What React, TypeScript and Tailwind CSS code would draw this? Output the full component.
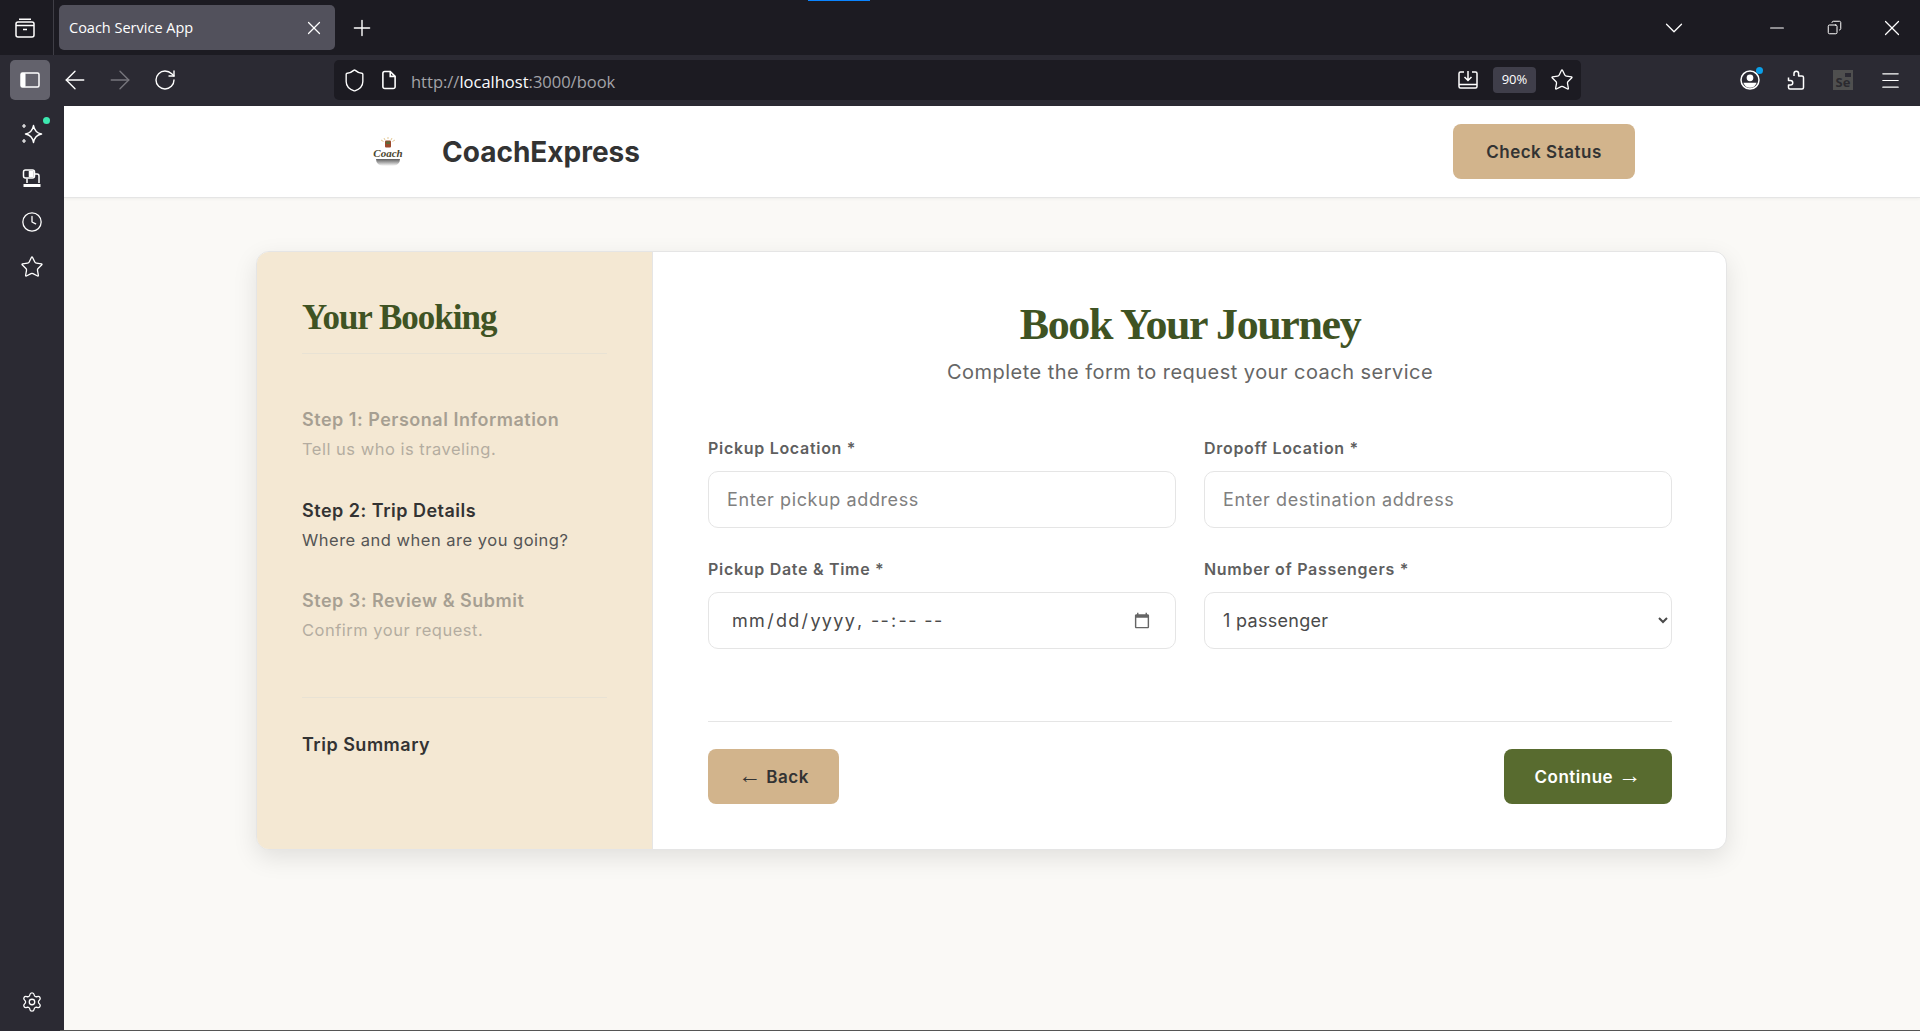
import { ArrowLeft, ArrowRight, ChevronDown, Clock, Copy, Menu, Minus, Plus, RotateCw, Settings, Shield, Star, X } from "lucide-react";

const SANS = "font-['Inter','Noto_Sans',sans-serif]";
const SERIF = "font-['Liberation_Serif',serif]";
const ARROW = "font-['Liberation_Sans',sans-serif] font-normal text-[23px] leading-[0]";

const STEPS = [
	{ title: "Step 1: Personal Information", text: "Tell us who is traveling.", active: false },
	{ title: "Step 2: Trip Details", text: "Where and when are you going?", active: true },
	{ title: "Step 3: Review & Submit", text: "Confirm your request.", active: false },
];

function TabGroupIcon() {
	return (
		<svg width="24" height="24" viewBox="0 0 24 24" fill="none" stroke="currentColor" strokeWidth="1.5">
			<rect x="3" y="6" width="18" height="15" rx="2" />
			<path d="M6 3.200h12M3 9.500h18M10 13.500h4" />
		</svg>
	);
}

function SidebarIcon() {
	return (
		<svg width="22" height="22" viewBox="0 0 22 22" fill="none">
			<rect x="2" y="4" width="18" height="14" rx="1.500" stroke="white" strokeWidth="1.500" />
			<rect x="2" y="4" width="4.500" height="14" rx="1" fill="white" />
		</svg>
	);
}

function FileIcon() {
	return (
		<svg width="22" height="22" viewBox="0 0 18 18" fill="none" stroke="currentColor" strokeWidth="1.300">
			<path d="M4 3.500a1.500 1.500 0 0 1 1.500-1.500H10l4 4v8.500a1.500 1.500 0 0 1-1.500 1.500h-7A1.500 1.500 0 0 1 4 14.500z" />
			<path d="M10 2v4h4" />
		</svg>
	);
}

function SaveIcon() {
	return (
		<svg width="22" height="20" viewBox="0 0 22 20" fill="none" stroke="currentColor" strokeWidth="1.500">
			<path d="M7 2H3.500A1.500 1.500 0 0 0 2 3.500v13A1.500 1.500 0 0 0 3.500 18h15a1.500 1.500 0 0 0 1.500-1.500v-13A1.500 1.500 0 0 0 18.500 2H15" />
			<path d="M2 14.500h18M11 1v9M7.500 7l3.500 3.500L14.500 7" />
		</svg>
	);
}

function AccountIcon() {
	return (
		<svg width="20" height="20" viewBox="0 0 20 20" fill="none" stroke="currentColor" strokeWidth="1.500">
			<circle cx="10" cy="10" r="9" />
			<circle cx="10" cy="7.800" r="2.600" fill="currentColor" />
			<path d="M4.500 13.500h11a6 6 0 0 1-11 0z" fill="currentColor" />
		</svg>
	);
}

function PuzzleIcon() {
	return (
		<svg width="18" height="20" viewBox="0 0 18 20" fill="none" stroke="currentColor" strokeWidth="1.500" strokeLinejoin="round">
			<path d="M7 6V3.500a2.300 2.300 0 0 1 4.600 0V6h3.400a1.500 1.500 0 0 1 1.500 1.500v10a1.500 1.500 0 0 1-1.500 1.500H3a1.500 1.500 0 0 1-1.500-1.500V15H3.500a2 2 0 0 0 0-4.500H1.500V7.500" />
		</svg>
	);
}

function SparkleIcon() {
	return (
		<svg width="24" height="24" viewBox="0 0 24 24" fill="none" stroke="currentColor" strokeWidth="1.500" strokeLinejoin="round">
			<path d="M13.500 3.500c.8 5 3 7.500 8 8.500-5 1-7.200 3.500-8 8.500-.8-5-3-7.500-8-8.500 5-1 7.200-3.500 8-8.500z" />
			<path d="M4 2v4M2 4h4M4 17v4M2 19h4" strokeWidth="1.200" />
		</svg>
	);
}

function CameraDeskIcon() {
	return (
		<svg width="20" height="20" viewBox="0 0 20 20" fill="none" stroke="currentColor" strokeWidth="1.500">
			<rect x="1.500" y="1" width="11" height="8" rx="2" />
			<rect x="7.500" y="2.500" width="3.500" height="5" fill="currentColor" />
			<path d="M12.500 5H15a2 2 0 0 1 2 2v7M5 9.500V14" />
			<path d="M1.500 16.500h17" strokeWidth="3" />
		</svg>
	);
}

function CoachLogo() {
	return (
		<div className="w-[60px] h-[50px] flex flex-col items-center justify-center">
			<svg width="16" height="11" viewBox="0 0 16 11">
				<g stroke="#d9b36a" strokeWidth="0.7">
					<path d="M8 0v2M4 1l1 2M12 1l-1 2M1 3l2.500 1.500M15 3l-2.500 1.500" />
				</g>
				<rect x="5" y="3.500" width="6" height="7" rx="1" fill="#9c4a2c" />
				<rect x="6" y="4.500" width="4" height="2.500" fill="#5b6b3a" />
			</svg>
			<span className="font-['Liberation_Serif',serif] italic font-bold text-[11px] leading-[11px] text-[#4a4630]">Coach</span>
			<div className="w-[24px] h-[7px] rounded-b-full bg-gradient-to-b from-[#5f5f5f] to-white" />
		</div>
	);
}

function Field({ label, children }: { label: string; children: React.ReactNode }) {
	return (
		<div className="flex flex-col gap-[14px]">
			<label className="text-[16px] leading-[18px] font-semibold tracking-[0.7px] text-[#5f5f5f]">{label}</label>
			{children}
		</div>
	);
}

const INPUT = "w-full h-[57px] rounded-[10px] border border-[#e5e5e5] bg-white text-[18px] text-[#4a4a4a] outline-none";

export default function App() {
	return (
		<div className="w-full h-[1031px] flex flex-col overflow-hidden relative bg-[#2b2a33] font-['Inter',sans-serif]">
			<div className="absolute top-0 left-[808px] w-[62px] h-[1px] bg-[#0a84ff]" />
			<div className="absolute bottom-0 left-[60px] right-0 h-[1px] bg-[#555555]" />

			{/* TAB BAR */}
			<div className="h-[55px] shrink-0 flex items-center bg-[#1c1b22] text-white font-['Open_Sans',sans-serif]">
				<div className="w-[54px] h-full flex items-center pl-[13px] border-r border-[#3f3e46]">
					<TabGroupIcon />
				</div>
				<div className="ml-[5px] w-[276px] h-[45px] rounded-[5px] bg-[#52515c] flex items-center justify-between pl-[10px] pr-[10px] text-[14.5px]">
					<span>Coach Service App</span>
					<X size={22} strokeWidth={1.3} />
				</div>
				<Plus size={26} strokeWidth={1.3} className="ml-[14px]" />
				<div className="ml-auto flex items-center mr-[15px]">
					<ChevronDown size={30} className="mr-[77px]" strokeWidth={1} />
					<Minus size={22} className="mr-[39px]" strokeWidth={1.2} />
					<Copy size={15} className="mr-[37px] -scale-x-100" strokeWidth={1.6} />
					<X size={26} strokeWidth={1.1} />
				</div>
			</div>

			{/* NAV BAR */}
			<div className="h-[51px] shrink-0 pt-[5px] flex items-start text-white font-['Open_Sans',sans-serif]">
				<div className="ml-[10px] w-[40px] h-[40px] rounded-[5px] bg-[#63626c] flex items-center justify-center">
					<SidebarIcon />
				</div>
				<div className="h-[40px] flex items-center ml-[10px]">
					<ArrowLeft size={30} strokeWidth={1.1} />
					<ArrowRight size={30} strokeWidth={1.1} className="ml-[15px] text-[#77767d]" />
					<RotateCw size={24} strokeWidth={1.4} className="ml-[18px]" />
				</div>
				<div className="ml-[157px] w-[1247px] h-[40px] rounded-[5px] bg-[#1c1b22] flex items-center text-[16.5px]">
					<Shield size={25} strokeWidth={1.3} className="ml-[8px]" />
					<span className="ml-[11px]"><FileIcon /></span>
					<span className="ml-[11px] mt-[5px] text-[#a3a3a8]">http://<span className="text-[#fbfbfe]">localhost</span>:3000/book</span>
					<div className="ml-auto flex items-center">
						<SaveIcon />
						<div className="ml-[14px] w-[43px] h-[26px] rounded-[4px] bg-[#3f3e4a] flex items-center justify-center text-[13px]">90%</div>
						<Star size={24} strokeWidth={1.3} className="ml-[14px] mr-[7px]" />
					</div>
				</div>
				<div className="ml-auto h-[40px] flex items-center mr-[18px]">
					<div className="relative">
						<AccountIcon />
						<div className="absolute -top-[3px] -right-[3px] w-[7px] h-[7px] rounded-full bg-[#0a9fe8]" />
					</div>
					<span className="ml-[27px]"><PuzzleIcon /></span>
					<div className="relative ml-[28px] w-[20px] h-[20px] bg-[#4f4f4f] text-[#2b2a2f] text-[13px] leading-[25px] font-bold text-center">
						Se
						<div className="absolute top-[3px] right-[2px] w-[6px] h-[4px] bg-[#2b2a33]" />
					</div>
					<Menu size={23} strokeWidth={1.3} className="ml-[26px]" />
				</div>
			</div>

			<div className="flex-1 min-h-0 flex">
				{/* SIDEBAR */}
				<div className="w-[64px] shrink-0 flex flex-col items-center pt-[16px] pb-[18px] text-white">
					<div className="relative h-[24px]">
						<SparkleIcon />
						<div className="absolute top-[-5px] left-[23px] w-[7px] h-[7px] rounded-full bg-[#3de8b0]" />
					</div>
					<div className="mt-[23px]"><CameraDeskIcon /></div>
					<Clock size={22} strokeWidth={1.4} className="mt-[22px]" />
					<Star size={24} strokeWidth={1.3} className="mt-[22px]" />
					<Settings size={22} strokeWidth={1.4} className="mt-auto" />
				</div>

				{/* PAGE */}
				<div className={`flex-1 min-w-0 bg-[#faf9f6] ${SANS}`}>
					<header className="h-[92px] bg-white border-b border-[#e5e5e5] flex items-center justify-between pl-[294px] pr-[285px] shadow-[0_1px_3px_rgba(0,0,0,0.05)]">
						<div className="flex items-center gap-[24px]">
							<CoachLogo />
							<span className="text-[28px] font-bold text-[#333333]">CoachExpress</span>
						</div>
						<button className="w-[182px] h-[55px] pt-[2px] rounded-[8px] bg-[#d2b48c] text-[#333333] text-[17px] tracking-[0.5px] font-semibold">Check Status</button>
					</header>

					<main className="mt-[53px] ml-[192px] w-[1471px] h-[599px] flex rounded-[13px] overflow-hidden bg-white border border-[#e5e5e5] shadow-[0_8px_24px_rgba(0,0,0,0.1)]">
						<aside className="w-[396px] shrink-0 bg-[#f4e8d3] border-r border-[#e5e5e5] pt-[46px] px-[45px]">
							<h2 className={`${SERIF} text-[35px] leading-[40px] tracking-[-1px] font-bold text-[#3f5323] pb-[15px] border-b border-[#e8e2d4]`}>Your Booking</h2>
							<div className="mt-[55px] flex flex-col gap-[40.5px]">
								{STEPS.map((step) => (
									<div key={step.title} className={step.active ? "" : "opacity-40"}>
										<div className="text-[18px] leading-[22px] tracking-[0.5px] font-semibold text-[#333333]">{step.title}</div>
										<div className="mt-[8px] text-[16.5px] leading-[20px] tracking-[0.5px] text-[#555555]">{step.text}</div>
									</div>
								))}
							</div>
							<div className="mt-[57px] pt-[36px] border-t border-[#e8e2d4] text-[18px] leading-[22px] tracking-[0.5px] font-semibold text-[#333333]">Trip Summary</div>
						</aside>

						<section className="flex-1 min-w-0 pt-[45px] pl-[55px] pr-[54px]">
							<h1 className={`${SERIF} text-center text-[44px] leading-[55px] tracking-[-1.4px] font-bold text-[#3f5323]`}>Book Your Journey</h1>
							<p className="mt-[6px] text-center text-[20px] leading-[28px] tracking-[0.47px] text-[#666666]">Complete the form to request your coach service</p>

							<div className="mt-[53px] grid grid-cols-2 gap-x-[28px] gap-y-[32px]">
								<Field label="Pickup Location *">
									<input className={`${INPUT} px-[18px] tracking-[0.6px] placeholder:text-[#808080]`} placeholder="Enter pickup address" />
								</Field>
								<Field label="Dropoff Location *">
									<input className={`${INPUT} px-[18px] tracking-[0.6px] placeholder:text-[#808080]`} placeholder="Enter destination address" />
								</Field>
								<Field label="Pickup Date & Time *">
									<input type="datetime-local" className={`${INPUT} px-[22px] tracking-[1.3px] [&::-webkit-calendar-picker-indicator]:opacity-60 [&::-webkit-calendar-picker-indicator]:w-[18px] [&::-webkit-calendar-picker-indicator]:h-[18px]`} />
								</Field>
								<Field label="Number of Passengers *">
									<select className={`${INPUT} pl-[14px] pr-[4px] tracking-[0.3px]`} defaultValue="1">
										<option value="1">1 passenger</option>
										<option value="2">2 passengers</option>
									</select>
								</Field>
							</div>

							<div className="mt-[72px] pt-[27px] border-t border-[#e5e5e5] flex justify-between">
								<button className="w-[131px] h-[55px] pt-[2px] rounded-[8px] bg-[#d2b48c] text-[#333333] text-[17px] tracking-[0.5px] font-semibold">
									<span className={ARROW}>←</span> Back
								</button>
								<button className="w-[168px] h-[55px] pt-[2px] rounded-[8px] bg-[#586b2f] text-white text-[17px] tracking-[0.5px] font-semibold">
									Continue <span className={ARROW}>→</span>
								</button>
							</div>
						</section>
					</main>
				</div>
			</div>
		</div>
	);
}
